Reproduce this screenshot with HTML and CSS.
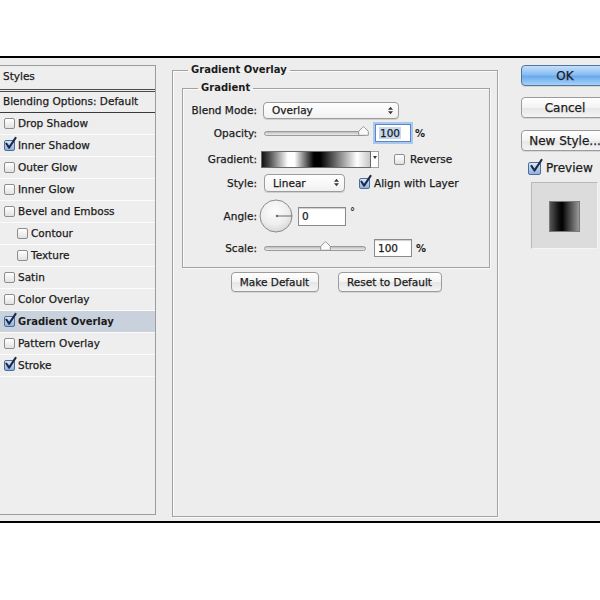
FILE: index.html
```html
<!DOCTYPE html>
<html>
<head>
<meta charset="utf-8">
<link rel="stylesheet" href="styles.css">
</head>
<body>
<div class="dialog">
  <div class="styles-panel">
    <div class="sp-head">Styles</div>
    <div class="sp-blend">Blending Options: Default</div>
    <ul class="sp-list">
      <li class="sp-item"><span class="cb"></span>Drop Shadow</li>
      <li class="sp-item"><span class="cb on"><svg class="tick" viewBox="0 0 14 14"><path d="M2.5 7 L5.5 11.5 L12.5 1"/></svg></span>Inner Shadow</li>
      <li class="sp-item"><span class="cb"></span>Outer Glow</li>
      <li class="sp-item"><span class="cb"></span>Inner Glow</li>
      <li class="sp-item"><span class="cb"></span>Bevel and Emboss</li>
      <li class="sp-item sub"><span class="cb"></span>Contour</li>
      <li class="sp-item sub"><span class="cb"></span>Texture</li>
      <li class="sp-item"><span class="cb"></span>Satin</li>
      <li class="sp-item"><span class="cb"></span>Color Overlay</li>
      <li class="sp-item selected"><span class="cb on"><svg class="tick" viewBox="0 0 14 14"><path d="M2.5 7 L5.5 11.5 L12.5 1"/></svg></span>Gradient Overlay</li>
      <li class="sp-item"><span class="cb"></span>Pattern Overlay</li>
      <li class="sp-item"><span class="cb on"><svg class="tick" viewBox="0 0 14 14"><path d="M2.5 7 L5.5 11.5 L12.5 1"/></svg></span>Stroke</li>
    </ul>
  </div>

  <fieldset class="fs-outer">
    <legend class="lg-outer">Gradient Overlay</legend>
    <fieldset class="fs-inner">
      <legend class="lg-inner">Gradient</legend>
      <div class="form">
        <div class="lbl">Blend Mode:</div>
        <div class="ctl">
          <div class="select sel-blend">Overlay
            <svg class="updown" viewBox="0 0 6 10"><path d="M0 4 L3 0.5 L6 4Z M0 6 L3 9.5 L6 6Z"/></svg>
          </div>
        </div>

        <div class="lbl">Opacity:</div>
        <div class="ctl">
          <div class="slider">
            <div class="track"></div>
            <svg class="thumb thumb-op" viewBox="0 0 11 10"><path d="M5.5 0.8 Q6 0.8 6.5 1.4 L10.3 5.3 L10.3 9.3 L0.7 9.3 L0.7 5.3 L4.5 1.4 Q5 0.8 5.5 0.8Z"/></svg>
          </div>
          <div class="num focus"><span class="hl">100</span></div>
          <span class="unit">%</span>
        </div>

        <div class="lbl">Gradient:</div>
        <div class="ctl">
          <div class="swatch"></div>
          <div class="swatch-arrow"><svg viewBox="0 0 4 3"><path d="M0 0 L4 0 L2 3Z"/></svg></div>
          <span class="cb cb-rev"></span>
          <span class="opt">Reverse</span>
        </div>

        <div class="lbl">Style:</div>
        <div class="ctl">
          <div class="select sel-style">Linear
            <svg class="updown" viewBox="0 0 6 10"><path d="M0 4 L3 0.5 L6 4Z M0 6 L3 9.5 L6 6Z"/></svg>
          </div>
          <span class="cb on cb-align"><svg class="tick" viewBox="0 0 14 14"><path d="M2.5 7 L5.5 11.5 L12.5 1"/></svg></span>
          <span class="opt opt-align">Align with Layer</span>
        </div>

        <div class="lbl">Angle:</div>
        <div class="ctl">
          <svg class="dial" viewBox="0 0 34 34">
            <defs>
              <radialGradient id="dg" cx="0.45" cy="0.35" r="0.7">
                <stop offset="0" stop-color="#fdfdfd"/>
                <stop offset="0.6" stop-color="#eeeeee"/>
                <stop offset="1" stop-color="#d2d2d2"/>
              </radialGradient>
            </defs>
            <circle cx="17" cy="17" r="16" fill="url(#dg)" stroke="#8c8c8c" stroke-width="1"/>
            <line x1="18" y1="17" x2="33" y2="17" stroke="#6a6a6a" stroke-width="1"/>
            <circle cx="18" cy="17" r="1.2" fill="#6a6a6a"/>
          </svg>
          <div class="num num-angle">0</div>
          <span class="deg">°</span>
        </div>

        <div class="lbl">Scale:</div>
        <div class="ctl">
          <div class="slider">
            <div class="track"></div>
            <svg class="thumb thumb-sc" viewBox="0 0 11 10"><path d="M5.5 0.8 Q6 0.8 6.5 1.4 L10.3 5.3 L10.3 9.3 L0.7 9.3 L0.7 5.3 L4.5 1.4 Q5 0.8 5.5 0.8Z"/></svg>
          </div>
          <div class="num">100</div>
          <span class="unit">%</span>
        </div>
      </div>
    </fieldset>
    <div class="defaults">
      <div class="btn btn-make">Make Default</div>
      <div class="btn btn-reset">Reset to Default</div>
    </div>
  </fieldset>

  <div class="actions">
    <div class="btn big ok">OK</div>
    <div class="btn big cancel">Cancel</div>
    <div class="btn big newstyle">New Style...</div>
    <div class="preview-row">
      <span class="cb on cb-big"><svg class="tick" viewBox="0 0 14 14"><path d="M2.5 7 L5.5 11.5 L12.5 1"/></svg></span>
      <span>Preview</span>
    </div>
    <div class="preview-box"><div class="preview-sq"></div></div>
  </div>
</div>
</body>
</html>
```

FILE: styles.css
```css
html, body {
  margin: 0;
  padding: 0;
  background: #ffffff;
  overflow: hidden;
}
body {
  font-family: "DejaVu Sans", "Verdana", sans-serif;
  color: #1b1b1b;
}
.dialog {
  margin-top: 56px;
  height: 463px;
  border-top: 2px solid #000;
  border-bottom: 2px solid #000;
  background: #ededed;
  display: flex;
  align-items: flex-start;
  overflow: hidden;
  -webkit-text-stroke: 0.25px #1b1b1b;
}

/* ---------- left styles list ---------- */
.styles-panel {
  flex: none;
  margin-top: 7px;
  width: 155px;
  height: 448px;
  border: 1px solid #9c9c9c;
  border-left: none;
  background: #eeeeee;
  font-size: 10.5px;
}
.sp-head {
  height: 23px;
  line-height: 21px;
  padding-left: 3px;
  border-bottom: 1px solid #4a4a4a;
}
.sp-blend {
  margin-top: 1px;
  height: 20px;
  line-height: 19px;
  padding-left: 3px;
  border-top: 1px solid #4a4a4a;
  border-bottom: 1px solid #3a3a3a;
}
.sp-list {
  list-style: none;
  margin: 0;
  padding: 0;
}
.sp-item {
  box-sizing: border-box;
  height: 22px;
  padding-bottom: 1px;
  border-bottom: 1px solid #fbfbfb;
  display: flex;
  align-items: center;
  padding-left: 4px;
}
.sp-item .cb {
  margin-right: 3px;
}
.sp-item.sub {
  padding-left: 17px;
}
.sp-item.selected {
  background: #c9d1dd;
  font-weight: bold;
  font-size: 10px;
  -webkit-text-stroke: 0;
}

/* ---------- checkboxes ---------- */
.cb {
  position: relative;
  flex: none;
  display: inline-block;
  box-sizing: border-box;
  width: 11px;
  height: 11px;
  border: 1px solid #8d8d8d;
  border-radius: 2px;
  background: linear-gradient(#ffffff, #e2e2e2);
}
.cb.on {
  border-color: #4f6c97;
  background: linear-gradient(#dde9f8, #8db0df);
}
.tick {
  position: absolute;
  left: -1px;
  top: -4px;
  width: 13px;
  height: 13px;
  overflow: visible;
  fill: none;
  stroke: #1c2a48;
  stroke-width: 2.2;
  stroke-linecap: round;
  stroke-linejoin: round;
}

/* ---------- middle fieldsets ---------- */
.fs-outer {
  flex: none;
  box-sizing: border-box;
  margin: 6px 0 0 16px;
  width: 326px;
  height: 453px;
  padding: 6px 7px 0 9px;
  border: 1px solid #a2a2a2;
  box-shadow: 1px 1px 0 #fafafa, inset 1px 1px 0 #fafafa;
  min-inline-size: 0;
}
.lg-outer {
  font-size: 10px;
  font-weight: bold;
  line-height: 12px;
  padding: 0 3px;
  margin-left: 6px;
  -webkit-text-stroke: 0;
}
.fs-inner {
  box-sizing: border-box;
  margin: 0;
  width: 308px;
  padding: 6px 0 9px 0;
  border: 1px solid #a2a2a2;
  box-shadow: 1px 1px 0 #fafafa, inset 1px 1px 0 #fafafa;
  min-inline-size: 0;
}
.lg-inner {
  font-size: 10px;
  font-weight: bold;
  line-height: 12px;
  padding: 0 3px;
  margin-left: 15px;
  -webkit-text-stroke: 0;
}
.form {
  display: grid;
  grid-template-columns: 74px 1fr;
  grid-template-rows: 20px 26px 26px 22px 44px 20px;
  column-gap: 6px;
  font-size: 10.5px;
}
.lbl {
  text-align: right;
  align-self: center;
  white-space: nowrap;
}
.ctl {
  display: flex;
  align-items: center;
  white-space: nowrap;
}

.select {
  position: relative;
  box-sizing: border-box;
  height: 17px;
  line-height: 15px;
  padding-left: 8px;
  border: 1px solid #9c9c9c;
  border-radius: 4px;
  background: linear-gradient(#ffffff, #f1f1f1);
  box-shadow: 0 1px 0 #d0d0d0;
}
.sel-blend {
  width: 136px;
}
.sel-style {
  width: 81px;
  height: 18px;
  line-height: 16px;
  margin-left: 1px;
}
.updown {
  position: absolute;
  right: 5px;
  top: 3px;
  width: 5px;
  height: 9px;
  fill: #3a3a3a;
  -webkit-text-stroke: 0;
}

.slider {
  position: relative;
  width: 102px;
  height: 12px;
  margin-left: 1px;
  display: flex;
  align-items: center;
}
.track {
  box-sizing: border-box;
  width: 100%;
  height: 5px;
  border: 1px solid #9a9a9a;
  border-radius: 3px;
  background: linear-gradient(#bdbdbd, #ededed);
}
.thumb {
  position: absolute;
  top: -1px;
  width: 11px;
  height: 10px;
  fill: #fbfbfb;
  stroke: #8c8c8c;
  stroke-width: 0.9;
}
.thumb-op { left: 94px; }
.thumb-sc { left: 56px; }

.num {
  box-sizing: border-box;
  width: 38px;
  height: 18px;
  line-height: 16px;
  padding-left: 3px;
  margin-left: 8px;
  border: 1px solid #8a8a8a;
  background: #ffffff;
  box-shadow: inset 0 1px 1px #cfcfcf;
}
.num.focus {
  border: 1px solid #5f86c4;
  box-shadow: 0 0 0 2px #a8c8f0;
  margin-left: 9px;
  width: 36px;
}
.hl {
  background: #c6d8ef;
  padding: 0 1px;
}
.unit {
  margin-left: 4px;
  font-weight: bold;
  font-size: 10px;
  -webkit-text-stroke: 0;
}

.swatch {
  box-sizing: border-box;
  width: 110px;
  height: 17px;
  margin-left: -2px;
  border: 1px solid #6a6a6a;
  background: linear-gradient(to right, #111 0%, #444 6%, #fff 24%, #fff 30%, #000 48%, #000 54%, #fff 88%, #c8c8c8 100%);
}
.swatch-arrow {
  box-sizing: border-box;
  width: 8px;
  height: 17px;
  border: 1px solid #a0a0a0;
  border-left: none;
  background: #ffffff;
  display: flex;
  justify-content: center;
  padding-top: 4px;
}
.swatch-arrow svg {
  width: 4px;
  height: 3px;
  fill: #333;
}
.cb-rev {
  margin-left: 15px;
}
.opt {
  margin-left: 5px;
}
.cb-align {
  margin-left: 14px;
}
.opt-align {
  margin-left: 4px;
}

.dial {
  width: 34px;
  height: 34px;
  margin-left: -4px;
}
.num-angle {
  width: 48px;
  height: 19px;
  margin-left: 5px;
  line-height: 17px;
}
.deg {
  align-self: flex-start;
  margin-top: 12px;
  margin-left: 4px;
  font-size: 10px;
  font-weight: bold;
  color: #2a2a2a;
  -webkit-text-stroke: 0;
}

/* ---------- buttons ---------- */
.btn {
  box-sizing: border-box;
  display: flex;
  align-items: center;
  justify-content: center;
  border: 1px solid #9b9b9b;
  border-radius: 4px;
  background: linear-gradient(#ffffff, #f3f3f3 50%, #e6e6e6 51%, #f4f4f4);
  box-shadow: 0 1px 0 #d6d6d6;
  white-space: nowrap;
}
.defaults {
  display: flex;
  justify-content: center;
  gap: 19px;
  margin-top: 4px;
  font-size: 10.5px;
}
.btn-make {
  width: 88px;
  height: 20px;
}
.btn-reset {
  width: 104px;
  height: 20px;
}

.actions {
  flex: none;
  width: 88px;
  margin-left: 23px;
  display: flex;
  flex-direction: column;
  font-size: 12px;
}
.big {
  width: 88px;
  height: 21px;
}
.ok {
  margin-top: 7px;
  border-color: #55739f;
  background: linear-gradient(#c4e0fa, #88bdf1 45%, #6aa9ec 55%, #a6d2fa);
}
.cancel {
  margin-top: 11px;
}
.newstyle {
  margin-top: 12px;
}
.preview-row {
  display: flex;
  align-items: center;
  height: 16px;
  margin-top: 9px;
  margin-left: 7px;
}
.cb-big {
  width: 13px;
  height: 13px;
  margin-right: 5px;
}
.cb-big .tick {
  left: 0;
  top: -4px;
  width: 14px;
  height: 14px;
}
.preview-box {
  box-sizing: border-box;
  margin-top: 6px;
  margin-left: 10px;
  width: 67px;
  height: 67px;
  background: #dcdcdc;
  border-top: 1px solid #b8b8b8;
  border-left: 1px solid #b8b8b8;
  border-right: 1px solid #f4f4f4;
  border-bottom: 1px solid #f4f4f4;
  padding: 18px 0 0 17px;
}
.preview-sq {
  box-sizing: border-box;
  width: 31px;
  height: 31px;
  border: 1px solid #7a7a7a;
  background: linear-gradient(to right, #555 0%, #111 30%, #000 42%, #333 60%, #999 100%);
}
```
